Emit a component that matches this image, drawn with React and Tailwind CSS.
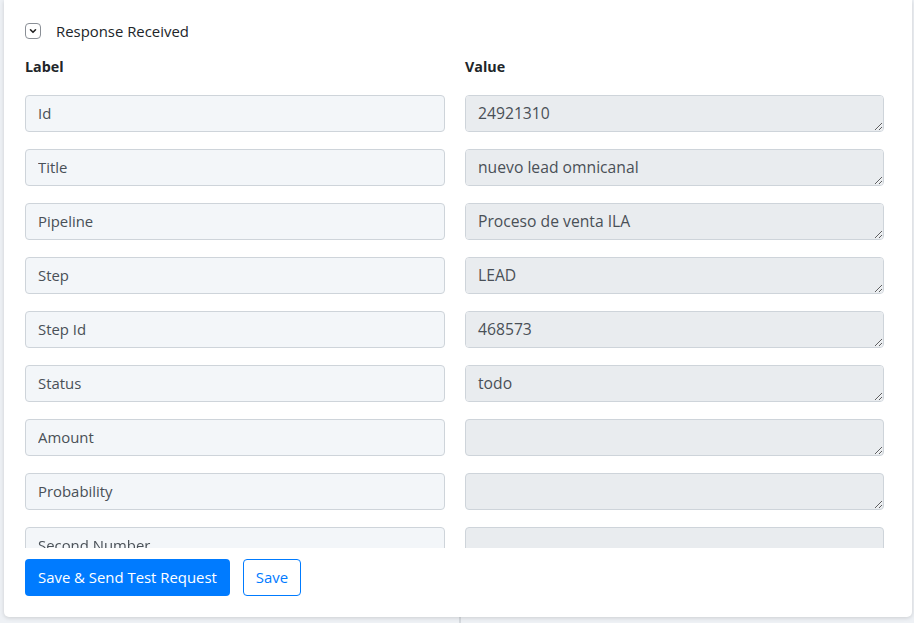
import React from 'react';

const fields = [
  { label: 'Id', value: '24921310' },
  { label: 'Title', value: 'nuevo lead omnicanal' },
  { label: 'Pipeline', value: 'Proceso de venta ILA' },
  { label: 'Step', value: 'LEAD' },
  { label: 'Step Id', value: '468573' },
  { label: 'Status', value: 'todo' },
  { label: 'Amount', value: '' },
  { label: 'Probability', value: '' },
  { label: 'Second Number', value: '' },
  { label: 'Currency', value: '' },
];

function Chevron() {
  return (
    <svg width="10" height="10" viewBox="0 0 10 10" fill="none">
      <path d="M2.5 3.8 L5 6.3 L7.5 3.8" stroke="#222" strokeWidth="1.6" strokeLinecap="round" strokeLinejoin="round" />
    </svg>
  );
}

export default function App() {
  return (
    <div className="relative h-[623px] overflow-hidden bg-[#eef1f5] pl-[4px] pr-[2px] font-['Open_Sans',sans-serif]">
      {/* divider from the panel underneath */}
      <div className="absolute left-[459px] top-0 h-full w-[2px] bg-[#d5d9de]" />

      <div className="relative h-[617px] rounded-b-[5px] bg-white shadow-[0_1px_4px_rgba(0,0,0,0.15)]">
        <div className="h-[548px] overflow-hidden pl-[21px] pr-[28px] pt-[23px]">
          <div className="flex h-[16px] items-center gap-[15px]">
            <div className="flex h-[16px] w-[16px] items-center justify-center rounded-[4px] border border-[#8a8f96] bg-white">
              <Chevron />
            </div>
            <span className="text-[14.9px] leading-[16px] text-[#212529]">Response Received</span>
          </div>

          <div className="mt-[20px] grid grid-cols-[420px_419px] gap-x-[20px]">
            <div className="text-[14.3px] font-bold leading-[16px] text-[#212529]">Label</div>
            <div className="text-[14.3px] font-bold leading-[16px] text-[#212529]">Value</div>
          </div>

          <div className="mt-[20px] grid grid-cols-[420px_419px] gap-x-[20px] gap-y-[17px]">
            {fields.map((f) => (
              <React.Fragment key={f.label}>
                <input
                  readOnly
                  value={f.label}
                  className="h-[37px] rounded-[4px] border border-[#ced4da] bg-[#f3f6f9] px-[12px] pb-[2px] text-[14.9px] text-[#495057] outline-none"
                />
                <textarea
                  readOnly
                  rows={1}
                  value={f.value}
                  className="h-[37px] resize-y rounded-[4px] border border-[#ced4da] bg-[#e9ecef] px-[12px] pt-[5px] pb-[7px] text-[15.7px] leading-[24px] text-[#495057] outline-none"
                />
              </React.Fragment>
            ))}
          </div>
        </div>

        <div className="flex gap-[13px] pl-[21px] pt-[11px]">
          <button className="h-[37px] rounded-[4px] bg-[#007bff] px-[13px] text-[14.9px] text-white">
            Save &amp; Send Test Request
          </button>
          <button className="h-[37px] rounded-[4px] border border-[#007bff] bg-white px-[12px] text-[14.9px] text-[#007bff]">
            Save
          </button>
        </div>
      </div>
    </div>
  );
}
